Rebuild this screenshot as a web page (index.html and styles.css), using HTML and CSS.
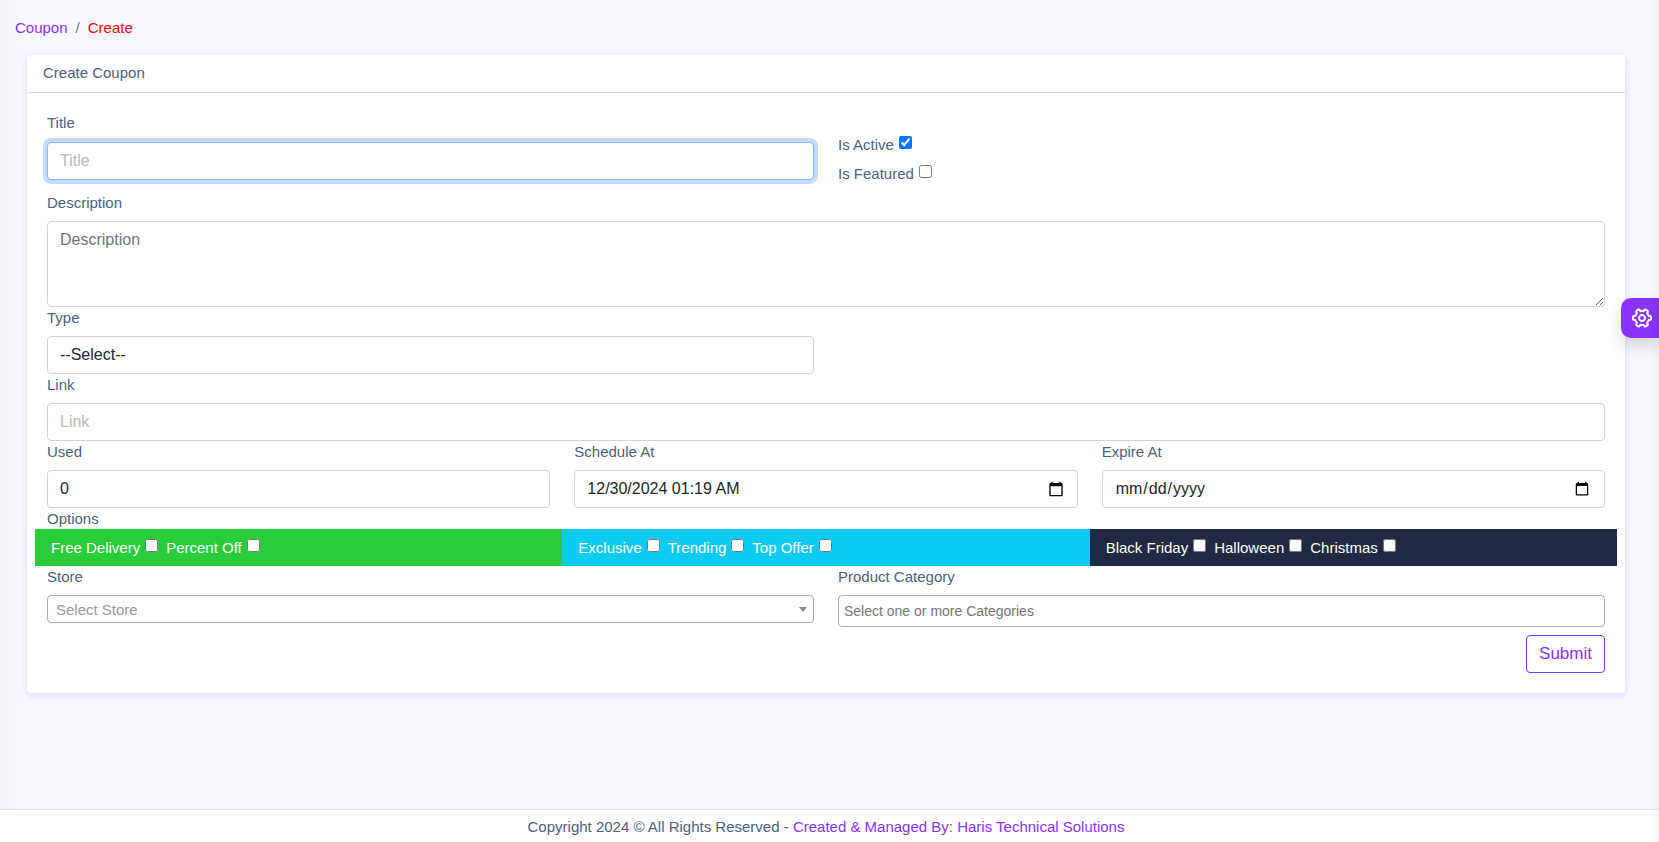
FILE: index.html
```html
<!DOCTYPE html>
<html lang="en">
<head>
<meta charset="utf-8">
<title>Create Coupon</title>
<link rel="stylesheet" href="styles.css">
</head>
<body>
<main class="page">
  <nav class="breadcrumb" aria-label="Breadcrumb">
    <a href="#">Coupon</a><span class="sep">/</span><span class="current">Create</span>
  </nav>
  <section class="card">
    <header class="card-header">Create Coupon</header>
    <form class="card-body">
      <div class="row halves row-title">
        <div>
          <label class="label" for="title">Title</label>
          <input class="control is-focused" id="title" type="text" placeholder="Title">
        </div>
        <div class="flags">
          <div class="check"><label for="active">Is Active</label><input id="active" type="checkbox" checked></div>
          <div class="check"><label for="featured">Is Featured</label><input id="featured" type="checkbox"></div>
        </div>
      </div>
      <div>
        <label class="label" for="description">Description</label>
        <textarea class="control area" id="description" placeholder="Description"></textarea>
      </div>
      <div class="row halves">
        <div>
          <label class="label" for="type">Type</label>
          <select class="control" id="type"><option>--Select--</option></select>
        </div>
      </div>
      <div>
        <label class="label" for="link">Link</label>
        <input class="control" id="link" type="text" placeholder="Link">
      </div>
      <div class="row thirds">
        <div>
          <label class="label" for="used">Used</label>
          <input class="control" id="used" type="text" value="0">
        </div>
        <div>
          <label class="label" for="schedule">Schedule At</label>
          <div class="picker">
            <input class="control" id="schedule" type="text" value="12/30/2024 01:19 AM">
            <button class="picker-button" type="button" aria-label="Open calendar">
              <svg viewBox="0 0 24 24" width="16" height="16" aria-hidden="true"><path d="M20 3h-1V1h-2v2H7V1H5v2H4c-1.100 0-2 .9-2 2v16c0 1.100.9 2 2 2h16c1.100 0 2-.9 2-2V5c0-1.100-.9-2-2-2zm0 18H4V8h16v13z"/></svg>
            </button>
          </div>
        </div>
        <div>
          <label class="label" for="expire">Expire At</label>
          <input class="control" id="expire" type="date">
        </div>
      </div>
      <div class="options-title">Options</div>
      <div class="options">
        <div class="group green">
          <div class="check"><label for="free">Free Delivery</label><input id="free" type="checkbox"></div>
          <div class="check"><label for="percent">Percent Off</label><input id="percent" type="checkbox"></div>
        </div>
        <div class="group cyan">
          <div class="check"><label for="exclusive">Exclusive</label><input id="exclusive" type="checkbox"></div>
          <div class="check"><label for="trending">Trending</label><input id="trending" type="checkbox"></div>
          <div class="check"><label for="top">Top Offer</label><input id="top" type="checkbox"></div>
        </div>
        <div class="group navy">
          <div class="check"><label for="friday">Black Friday</label><input id="friday" type="checkbox"></div>
          <div class="check"><label for="halloween">Halloween</label><input id="halloween" type="checkbox"></div>
          <div class="check"><label for="christmas">Christmas</label><input id="christmas" type="checkbox"></div>
        </div>
      </div>
      <div class="row halves">
        <div>
          <label class="label" for="store">Store</label>
          <div class="store-wrap">
            <select class="store" id="store"><option>Select Store</option></select>
          </div>
        </div>
        <div>
          <label class="label" for="category">Product Category</label>
          <input class="category" id="category" type="text" placeholder="Select one or more Categories">
        </div>
      </div>
      <div class="actions"><button class="submit" type="submit">Submit</button></div>
    </form>
  </section>
</main>
<footer class="footer">Copyright 2024 © All Rights Reserved - <a href="#">Created &amp; Managed By: Haris Technical Solutions</a></footer>
<button class="switcher" type="button" aria-label="Settings">
  <svg class="cog" viewBox="0 0 24 24" aria-hidden="true"><path d="M12 16c2.206 0 4-1.794 4-4s-1.794-4-4-4-4 1.794-4 4 1.794 4 4 4zm0-6c1.084 0 2 .916 2 2s-.916 2-2 2-2-.916-2-2 .916-2 2-2z"/><path d="m2.845 16.136 1 1.73c.531.917 1.809 1.261 2.73.73l.529-.306A8.1 8.1 0 0 0 9 19.402V20c0 1.103.897 2 2 2h2c1.103 0 2-.897 2-2v-.598a8.132 8.132 0 0 0 1.896-1.111l.529.306c.923.53 2.198.188 2.731-.731l.999-1.729a2.001 2.001 0 0 0-.731-2.732l-.505-.292a7.718 7.718 0 0 0 0-2.224l.505-.292a2.002 2.002 0 0 0 .731-2.732l-.999-1.729c-.531-.92-1.808-1.265-2.731-.732l-.529.306A8.1 8.1 0 0 0 15 4.598V4c0-1.103-.897-2-2-2h-2c-1.103 0-2 .897-2 2v.598a8.132 8.132 0 0 0-1.896 1.111l-.529-.306c-.924-.531-2.2-.187-2.731.732l-.999 1.729a2.001 2.001 0 0 0 .731 2.732l.505.292a7.683 7.683 0 0 0 0 2.223l-.505.292a2.003 2.003 0 0 0-.731 2.733zm3.326-2.758A5.703 5.703 0 0 1 6 12c0-.462.058-.926.17-1.378a.999.999 0 0 0-.47-1.108l-1.123-.65.998-1.729 1.145.662a.997.997 0 0 0 1.188-.142 6.071 6.071 0 0 1 2.384-1.399A1 1 0 0 0 11 5.3V4h2v1.3a1 1 0 0 0 .708.956 6.083 6.083 0 0 1 2.384 1.399.999.999 0 0 0 1.188.142l1.144-.661 1 1.729-1.124.649a1 1 0 0 0-.47 1.108c.112.452.17.916.17 1.378 0 .461-.058.925-.171 1.378a1 1 0 0 0 .471 1.108l1.123.649-.998 1.729-1.145-.661a.996.996 0 0 0-1.188.142 6.071 6.071 0 0 1-2.384 1.399A1 1 0 0 0 13 18.7l.002 1.3H11v-1.3a1 1 0 0 0-.708-.956 6.083 6.083 0 0 1-2.384-1.399.992.992 0 0 0-1.188-.141l-1.144.662-1-1.729 1.124-.651a1 1 0 0 0 .471-1.108z"/></svg>
</button>
</body>
</html>
```
FILE: styles.css
```css
*, *::before, *::after { box-sizing: border-box; }

body {
  margin: 0;
  min-height: 100vh;
  display: flex;
  flex-direction: column;
  font-family: "Liberation Sans", Arial, sans-serif;
  font-size: 15px;
  line-height: 21px;
  color: #4c5f7f;
  background: linear-gradient(to right, #f3f4f9, #f3f4f900) left / 24px 100% no-repeat, #f8f9ff;
}

/* soft shade along the right edge of the window */
body::after {
  content: "";
  position: fixed;
  inset: 0 0 0 auto;
  width: 8px;
  background: linear-gradient(to left, rgba(0, 0, 0, .04), rgba(0, 0, 0, 0));
  pointer-events: none;
}

a { color: #8833ff; text-decoration: none; }

.page { flex: 1; padding: 17px 34px 24px 27px; }

.breadcrumb { margin: 0 0 17px -12px; display: flex; gap: 8px; }
.sep { color: #6c757d; }
.current { color: #ff0000; }

.card {
  background: #fff;
  border-radius: 4px;
  box-shadow: 0 2px 6px rgba(218, 218, 253, .65), 0 2px 6px rgba(206, 206, 238, .54);
}
.card-header { padding: 7px 16px 9px; border-bottom: 1px solid #dfdfdf; }
.card-body { padding: 19px 20px 20px; }

.row { display: grid; column-gap: 24px; }
.halves { grid-template-columns: repeat(2, minmax(0, 1fr)); }
.thirds { grid-template-columns: repeat(3, minmax(0, 1fr)); }

.label { display: block; margin-bottom: 8px; }
.row-title .label { margin-bottom: 9px; }
.row-title { margin-bottom: 8px; }

.control {
  display: block;
  width: 100%;
  height: 38px;
  margin: 0;
  padding: 6px 12px;
  border: 1px solid #ced4da;
  border-radius: 4px;
  background: #fff;
  color: #212529;
  font: 16px/24px "Liberation Sans", Arial, sans-serif;
  appearance: none;
  outline: none;
}
.control::placeholder { color: #b9b9b9; opacity: 1; }
.area { height: 86px; resize: vertical; }
.area::placeholder { color: #6c757d; }
.is-focused, .control:focus {
  border-color: #86b7fe;
  box-shadow: 0 0 0 4px rgba(13, 110, 253, .25);
}

.picker { position: relative; }
.picker-button {
  position: absolute;
  top: 11px;
  right: 14px;
  display: flex;
  padding: 0;
  border: 0;
  background: none;
}

.flags { padding-top: 22px; display: grid; gap: 8px; align-content: start; }
.check { display: flex; gap: 5px; align-items: flex-start; }
.check input { width: 13px; height: 13px; margin: 2px 0 0; }

.options { margin: 0 -12px; display: grid; grid-template-columns: repeat(3, minmax(0, 1fr)); color: #fff; }
.group { display: flex; flex-wrap: wrap; column-gap: 8px; padding: 8px 16px; }
.green { background: #29cc39; }
.cyan { background: #0dcaf0; }
.navy { background: #212945; }

.store-wrap { position: relative; }
.store-wrap::after {
  content: "";
  position: absolute;
  top: 12px;
  right: 7px;
  border: 4px solid transparent;
  border-top: 5px solid #888;
  border-bottom: 0;
  pointer-events: none;
}
.store {
  display: block;
  width: 100%;
  height: 28px;
  padding: 1px 8px 0;
  border: 1px solid #aaa;
  border-radius: 4px;
  background: #fff;
  color: #999;
  font: 15px/26px "Liberation Sans", Arial, sans-serif;
  appearance: none;
}
.category {
  display: block;
  width: 100%;
  height: 32px;
  padding: 0 5px;
  border: 1px solid #aaa;
  border-radius: 4px;
  font: 14px "Liberation Sans", Arial, sans-serif;
}
.category::placeholder { color: #757575; }

.actions { margin-top: 8px; display: flex; justify-content: flex-end; }
.submit {
  padding: 6px 12px;
  border: 1px solid #8833ff;
  border-radius: 4px;
  background: #fff;
  color: #8833ff;
  font: 17px/24px "Liberation Sans", Arial, sans-serif;
}

.footer {
  padding: 6px 7px 5px 0;
  border-top: 1px solid #e4e4e4;
  background: #fff;
  text-align: center;
}

.switcher {
  position: fixed;
  top: 298px;
  right: 0;
  width: 38px;
  height: 40px;
  padding: 0 0 0 4px;
  display: flex;
  align-items: center;
  justify-content: center;
  border: 0;
  border-radius: 10px 0 0 10px;
  background: #8833ff;
  box-shadow: 0 8px 16px rgba(0, 0, 0, .15);
}
.cog { width: 24px; height: 24px; fill: #fff; transform: rotate(90deg); }
```
